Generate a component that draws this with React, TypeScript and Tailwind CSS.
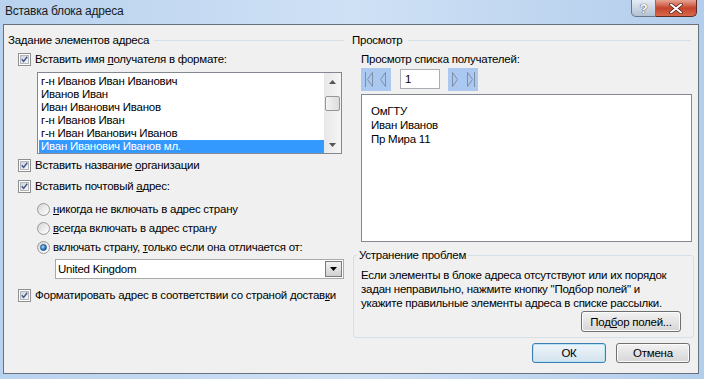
import React from 'react';

const names = [
  'г-н Иванов Иван Иванович',
  'Иванов Иван',
  'Иван Иванович Иванов',
  'г-н Иванов Иван',
  'г-н Иван Иванович Иванов',
];

function CheckBox() {
  return (
    <div className="flex h-[13px] w-[13px] shrink-0 border border-[#8e8f8f] bg-white p-[1px]">
      <div className="flex h-full w-full items-center justify-center border border-[#b3b7bd] bg-gradient-to-br from-[#cfd3d8] to-[#f7f7f7]">
        <svg width="9" height="9" viewBox="0 0 9 9">
          <path d="M1 4.2 L3.4 7 L8 1" fill="none" stroke="#41558a" strokeWidth="1.8" />
        </svg>
      </div>
    </div>
  );
}

function Radio({ on = false }: { on?: boolean }) {
  return (
    <div className="flex h-[13px] w-[13px] shrink-0 items-center justify-center rounded-full border border-[#9a9a9a] bg-gradient-to-br from-[#d2d2d2] via-[#ececec] to-white">
      {on && (
        <div className="h-[7px] w-[7px] rounded-full border border-[#1c4f86] bg-[radial-gradient(circle_at_35%_35%,#a8dcff,#2a7fcf_55%,#0c4a8d)]" />
      )}
    </div>
  );
}

function Label({ children }: { children: React.ReactNode }) {
  return <span className="whitespace-nowrap leading-[14px]">{children}</span>;
}

function Btn({ children, def = false, className = '' }: { children: React.ReactNode; def?: boolean; className?: string }) {
  return (
    <div
      className={`flex items-center justify-center rounded-[3px] border ${
        def
          ? 'border-[#3c7fb1] bg-gradient-to-b from-[#eef5fa] to-[#d3e3ee] shadow-[inset_0_0_0_1px_#b8e4fa]'
          : 'border-[#707070] bg-gradient-to-b from-[#f2f2f2] to-[#d6d6d6] shadow-[inset_0_0_0_1px_#fbfbfb]'
      } ${className}`}
    >
      {children}
    </div>
  );
}

export default function App() {
  return (
    <div className="flex h-[379px] w-[704px] flex-col overflow-hidden bg-gradient-to-r from-[#b9d2ee] via-[#cfe1f5] to-[#b3cdec] font-['Liberation_Sans',sans-serif] text-[11.5px] tracking-[-0.25px] text-black">
      {/* title bar */}
      <div className="flex h-[24px] shrink-0 justify-between">
        <span className="pl-[5px] pt-[4px] text-[12px] leading-[14px] text-[#1b1b1b]">Вставка блока адреса</span>
        <div className="mr-[7px] flex h-[17px]">
          <div className="flex w-[25px] items-center justify-center rounded-bl-[5px] border border-t-0 border-[#6a7687] bg-gradient-to-b from-[#e4ebf4] to-[#b3c1d3] text-[13px] font-bold leading-none text-white [text-shadow:0_0_1px_#3a4655,0_0_1px_#3a4655]">
            ?
          </div>
          <div className="flex w-[41px] items-center justify-center rounded-br-[5px] border border-l-0 border-t-0 border-[#5d2a22] bg-gradient-to-b from-[#e6a393] via-[#c4432c] to-[#d8674c]">
            <svg width="14" height="11" viewBox="0 0 14 11">
              <path d="M2 1.5 L12 9.5 M12 1.5 L2 9.5" stroke="#4a1d16" strokeWidth="3.4" strokeLinecap="round" />
              <path d="M2 1.5 L12 9.5 M12 1.5 L2 9.5" stroke="#fff" strokeWidth="2" strokeLinecap="round" />
            </svg>
          </div>
        </div>
      </div>

      {/* client area */}
      <div className="ml-[3px] mr-[5px] flex h-[350px] shrink-0 border border-[#69717c] bg-[#f0f0f0]">
        {/* left column */}
        <div className="flex w-[340px] flex-col">
          <div className="mt-[7px] flex h-[16px] items-center pl-[4px]">
            <Label>Задание элементов адреса</Label>
            <div className="ml-[5px] h-px flex-1 bg-[#d5dfe5]" />
          </div>

          <div className="mt-[4px] flex h-[14px] items-center gap-[4px] pl-[14px]">
            <CheckBox />
            <Label>
              Вставить имя <span className="underline">п</span>олучателя в формате:
            </Label>
          </div>

          <div className="ml-[33px] mt-[6px] flex h-[82px] w-[305px] border border-[#828790] bg-white">
            <div className="flex flex-1 flex-col pl-[1px] pt-[2px]">
              {names.map((n) => (
                <div key={n} className="h-[13px] whitespace-nowrap pl-[2px] leading-[13px]">
                  {n}
                </div>
              ))}
              <div className="h-[13px] whitespace-nowrap border border-dotted border-[#b8864b] bg-[#3399ff] pl-[1px] leading-[11px] text-white">
                Иван Иванович Иванов мл.
              </div>
            </div>
            <div className="flex w-[17px] flex-col bg-gradient-to-r from-[#e8e8e8] to-[#f5f5f5]">
              <div className="flex h-[17px] items-center justify-center">
                <svg width="7" height="4" viewBox="0 0 7 4">
                  <path d="M0 4 L3.5 0 L7 4Z" fill="#555" />
                </svg>
              </div>
              <div className="mx-[1px] mt-[6px] h-[15px] rounded-[2px] border border-[#979797] bg-gradient-to-r from-[#f3f3f3] to-[#dcdcdc]" />
              <div className="flex-1" />
              <div className="flex h-[17px] items-center justify-center">
                <svg width="7" height="4" viewBox="0 0 7 4">
                  <path d="M0 0 L3.5 4 L7 0Z" fill="#555" />
                </svg>
              </div>
            </div>
          </div>

          <div className="mt-[4px] flex h-[14px] items-center gap-[4px] pl-[14px]">
            <CheckBox />
            <Label>
              Вставить название <span className="underline">о</span>рганизации
            </Label>
          </div>

          <div className="mt-[7px] flex h-[14px] items-center gap-[4px] pl-[14px]">
            <CheckBox />
            <Label>
              Вставить почтовый <span className="underline">а</span>дрес:
            </Label>
          </div>

          <div className="mt-[9px] flex h-[14px] items-center gap-[3px] pl-[33px]">
            <Radio />
            <Label>
              <span className="underline">н</span>икогда не включать в адрес страну
            </Label>
          </div>
          <div className="mt-[5px] flex h-[14px] items-center gap-[3px] pl-[33px]">
            <Radio />
            <Label>
              <span className="underline">в</span>сегда включать в адрес страну
            </Label>
          </div>
          <div className="mt-[5px] flex h-[14px] items-center gap-[3px] pl-[33px]">
            <Radio on />
            <Label>
              включать страну, <span className="underline">т</span>олько если она отличается от:
            </Label>
          </div>

          <div className="ml-[51px] mt-[5px] flex h-[20px] w-[289px] border border-[#a9a9a9] bg-white">
            <div className="flex flex-1 items-center pl-[2px] leading-[14px]">United Kingdom</div>
            <div className="m-[1px] flex w-[17px] items-center justify-center border border-[#7a7a7a] bg-gradient-to-b from-[#f3f3f3] to-[#d0d0d0]">
              <svg width="7" height="4" viewBox="0 0 7 4">
                <path d="M0 0 L3.5 4 L7 0Z" fill="#000" />
              </svg>
            </div>
          </div>

          <div className="mt-[9px] flex h-[14px] items-center gap-[4px] pl-[14px]">
            <CheckBox />
            <Label>
              Форматировать адрес в соответствии со страной достав<span className="underline">к</span>и
            </Label>
          </div>
        </div>

        {/* right column */}
        <div className="ml-[8px] flex w-[342px] flex-col">
          <div className="mt-[7px] flex h-[16px] items-center">
            <Label>Просмотр</Label>
            <div className="ml-[5px] mr-[3px] h-px flex-1 bg-[#d5dfe5]" />
          </div>

          <div className="mt-[4px] flex h-[14px] items-center pl-[9px]">
            <Label>Просмотр списка получателей:</Label>
          </div>

          <div className="mt-[2px] flex h-[23px] items-start pl-[9px]">
            <div className="h-[23px] w-[30px] bg-[#aac8f0]">
              <svg width="30" height="23" viewBox="0 0 30 23">
                <g fill="none" stroke="#7d8ea9" strokeWidth="1">
                  <path d="M4.5 4 V19" />
                  <path d="M11.5 4.5 L6.5 11.5 L11.5 18.5 Z" />
                  <path d="M24.5 4.5 L19.5 11.5 L24.5 18.5 Z" />
                </g>
              </svg>
            </div>
            <div className="ml-[9px] mt-[1px] flex h-[20px] w-[40px] items-center border border-[#abadb3] bg-white pl-[4px] leading-[14px]">
              1
            </div>
            <div className="ml-[8px] h-[23px] w-[30px] bg-[#aac8f0]">
              <svg width="30" height="23" viewBox="0 0 30 23">
                <g fill="none" stroke="#7d8ea9" strokeWidth="1">
                  <path d="M4.5 4.5 L9.5 11.5 L4.5 18.5 Z" />
                  <path d="M19.5 4.5 L24.5 11.5 L19.5 18.5 Z" />
                  <path d="M26.5 4 V19" />
                </g>
              </svg>
            </div>
          </div>

          <div className="ml-[9px] mt-[3px] h-[148px] w-[331px] border border-[#828790] bg-white pl-[9px] pt-[9px] leading-[14px]">
            <div>ОмГТУ</div>
            <div>Иван Иванов</div>
            <div>Пр Мира 11</div>
          </div>

          <fieldset className="ml-[1px] mt-[6px] flex w-[341px] flex-col rounded-[3px] border border-[#d5dfe5] pb-[5px]">
            <legend className="ml-[3px] px-[2px] leading-[14px]">Устранение проблем</legend>
            <p className="mt-[6px] whitespace-nowrap pl-[7px] leading-[14px]">
              Если элементы в блоке адреса отсутствуют или их порядок
              <br />
              задан неправильно, нажмите кнопку "Подбор полей" и
              <br />
              укажите правильные элементы адреса в списке рассылки.
            </p>
            <Btn className="mr-[12px] mt-[1px] h-[21px] w-[100px] self-end">
              <Label>
                Под<span className="underline">б</span>ор полей...
              </Label>
            </Btn>
          </fieldset>

          <div className="mt-[5px] flex justify-end pr-[4px]">
            <Btn def className="h-[20px] w-[74px]">
              <Label>ОК</Label>
            </Btn>
            <Btn className="ml-[10px] h-[20px] w-[74px]">
              <Label>Отмена</Label>
            </Btn>
          </div>
        </div>
      </div>
    </div>
  );
}
